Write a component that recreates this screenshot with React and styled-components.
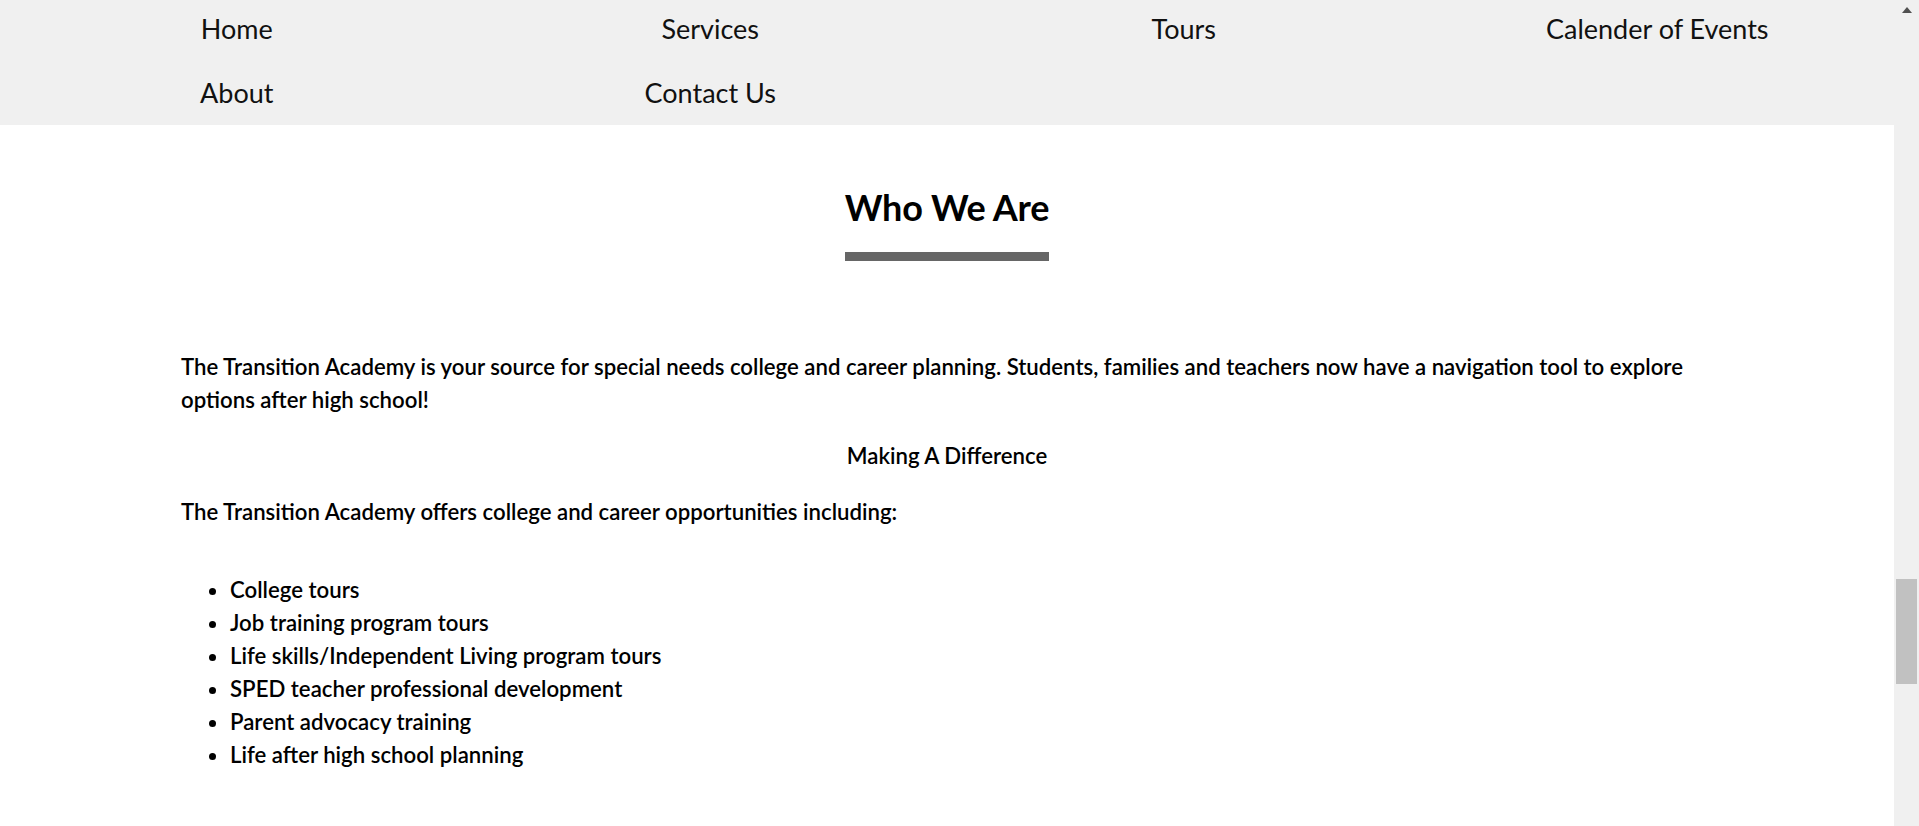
import React from 'react';
import styled, { createGlobalStyle } from 'styled-components';

const navItems = ['Home', 'Services', 'Tours', 'Calender of Events', 'About', 'Contact Us'];

const opportunities = [
  'College tours',
  'Job training program tours',
  'Life skills/Independent Living program tours',
  'SPED teacher professional development',
  'Parent advocacy training',
  'Life after high school planning',
];

const App = () => {
  return (
    <>
      <GlobalStyle />
      <Window>
        <Page>
          <Nav>
            {navItems.map((item) => (
              <NavLink key={item} href="#">
                {item}
              </NavLink>
            ))}
          </Nav>
          <Section>
            <TitleWrap>
              <Title>Who We Are</Title>
            </TitleWrap>
            <Text>
              The Transition Academy is your source for special needs college and career planning.
              Students, families and teachers now have a navigation tool to explore options after
              high school!
            </Text>
            <Subheading>Making A Difference</Subheading>
            <Text>The Transition Academy offers college and career opportunities including:</Text>
            <List>
              {opportunities.map((item) => (
                <li key={item}>{item}</li>
              ))}
            </List>
          </Section>
        </Page>
        <ScrollTrack>
          <ScrollArrow />
          <ScrollThumb />
        </ScrollTrack>
      </Window>
    </>
  );
};

const GlobalStyle = createGlobalStyle`
  html, body {
    margin: 0;
    padding: 0;
    overflow: hidden;
  }

  body {
    font-family: Lato, 'Liberation Sans', sans-serif;
    color: #000;
    background: #fff;
  }
`;

const Window = styled.div`
  display: flex;
  height: 100vh;
`;

const Page = styled.main`
  flex: 1;
  overflow: hidden;
`;

const Nav = styled.nav`
  display: grid;
  grid-template-columns: repeat(4, 1fr);
  grid-auto-rows: 58px;
  row-gap: 6px;
  padding-bottom: 3px;
  background: #f0f0f0;
`;

const NavLink = styled.a`
  display: flex;
  align-items: center;
  justify-content: center;
  padding-bottom: 2px;
  font-size: 27px;
  font-weight: 400;
  color: #111;
  text-decoration: none;
`;

const Section = styled.section`
  padding: 0 181px;
`;

const TitleWrap = styled.div`
  display: flex;
  justify-content: center;
  padding-top: 61px;
  margin-bottom: 89px;
`;

const Title = styled.h2`
  margin: 0;
  padding-bottom: 23px;
  border-bottom: 9px solid #666;
  font-size: 36px;
  font-weight: 700;
  line-height: 1.2;
  letter-spacing: -0.2px;
`;

const Text = styled.p`
  margin: 0 0 23px;
  font-size: 22.2px;
  font-weight: 600;
  line-height: 33px;
`;

const Subheading = styled(Text)`
  text-align: center;
`;

const List = styled.ul`
  margin: 45px 0 0;
  padding-left: 49px;
  font-size: 22.2px;
  font-weight: 600;
  line-height: 33px;
`;

const ScrollTrack = styled.aside`
  display: flex;
  flex-direction: column;
  align-items: center;
  width: 25px;
  background: #f0f0f0;
`;

const ScrollArrow = styled.div`
  margin-top: 7px;
  border-left: 5.5px solid transparent;
  border-right: 5.5px solid transparent;
  border-bottom: 6px solid #505050;
`;

const ScrollThumb = styled.div`
  width: 21px;
  height: 105px;
  margin-top: 566px;
  background: #c1c1c1;
`;

export default App;
